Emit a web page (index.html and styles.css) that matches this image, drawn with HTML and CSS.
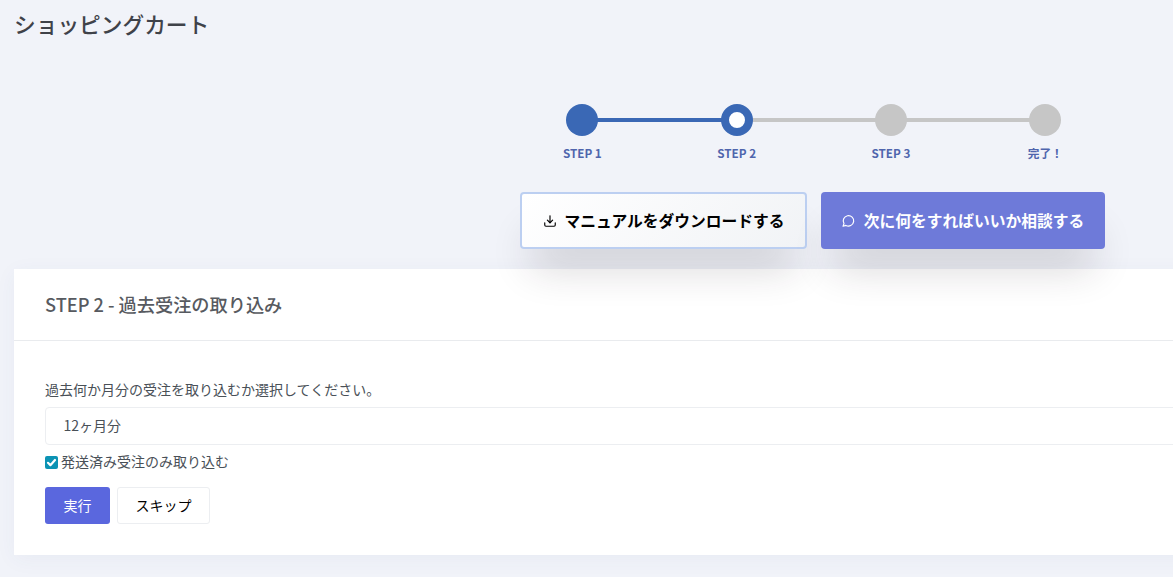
FILE: index.html
```html
<!DOCTYPE html>
<html lang="ja">
<head>
<meta charset="utf-8">
<title>ショッピングカート</title>
<link rel="stylesheet" href="styles.css">
</head>
<body>
<main class="page">
  <h1 class="page-title">ショッピングカート</h1>
  <ol class="stepper">
    <li class="step done"><span class="dot"></span><span class="step-label">STEP 1</span></li>
    <li class="step current"><span class="dot"></span><span class="step-label">STEP 2</span></li>
    <li class="step"><span class="dot"></span><span class="step-label">STEP 3</span></li>
    <li class="step"><span class="dot"></span><span class="step-label">完了！</span></li>
  </ol>
  <div class="actions">
    <a class="action light">
      <svg class="icon icon-download" viewBox="0 0 24 24" fill="none" stroke="currentColor" stroke-width="2" stroke-linecap="round" stroke-linejoin="round"><path d="M12 3v12"/><path d="M7.5 10.5 12 15l4.5-4.5"/><path d="M3 15v4a2 2 0 0 0 2 2h14a2 2 0 0 0 2-2v-4"/></svg>
      マニュアルをダウンロードする
    </a>
    <a class="action primary">
      <svg class="icon icon-chat" viewBox="0 0 24 24" fill="none" stroke="currentColor" stroke-width="2" stroke-linecap="round" stroke-linejoin="round"><path d="M3.5 21l1.6-4.6A9 9 0 1 1 8.4 19.6L3.5 21z"/></svg>
      次に何をすればいいか相談する
    </a>
  </div>
  <section class="card">
    <header class="card-header"><h2 class="card-title">STEP 2 - 過去受注の取り込み</h2></header>
    <div class="card-body">
      <label class="field-label">過去何か月分の受注を取り込むか選択してください。</label>
      <div class="select">12ヶ月分</div>
      <label class="check">
        <span class="checkbox"><svg viewBox="0 0 13 13" fill="none" stroke="#fff" stroke-width="2.2" stroke-linecap="round" stroke-linejoin="round"><path d="M3 6.8 5.4 9.2 10 4"/></svg></span>
        <span class="check-text">発送済み受注のみ取り込む</span>
      </label>
      <div class="buttons">
        <button class="btn btn-run">実行</button>
        <button class="btn btn-skip">スキップ</button>
      </div>
    </div>
  </section>
</main>
</body>
</html>
```

FILE: styles.css
```css
* { box-sizing: border-box; }
html, body { margin: 0; height: 100%; overflow: hidden; }
body {
  background: #f1f3f9;
  font-family: "Noto Sans CJK JP", "Noto Sans", sans-serif;
  color: #495057;
  font-size: 14px;
}
.page { padding: 8px 0 0 14px; width: 1400px; }
.page-title {
  margin: 0;
  font-size: 21.7px;
  line-height: 32px;
  font-weight: 500;
  color: #3f4249;
}
.stepper {
  list-style: none;
  margin: 64px 0 0 491.2px;
  padding: 0;
  display: flex;
  width: 617.2px;
}
.step {
  position: relative;
  width: 154.3px;
  display: flex;
  flex-direction: column;
  align-items: center;
}
.step + .step::before {
  content: "";
  position: absolute;
  top: 14px;
  left: -50%;
  width: 100%;
  height: 4px;
  background: #c6c6c6;
}
.step.done + .step::before { background: #3a68b5; }
.dot {
  position: relative;
  z-index: 1;
  width: 32px;
  height: 32px;
  border-radius: 50%;
  background: #c6c6c6;
}
.done .dot { background: #3a68b5; }
.current .dot { background: #fff; border: 8px solid #3a68b5; }
.step-label {
  margin-top: 8px;
  font-size: 11.7px;
  line-height: 18px;
  font-weight: 700;
  color: #4f65ad;
}
.actions {
  position: relative;
  z-index: 2;
  display: flex;
  gap: 14px;
  margin: 30px 0 0 506px;
}
.action {
  height: 57px;
  display: flex;
  align-items: center;
  justify-content: center;
  gap: 8px;
  font-size: 15.75px;
  font-weight: 700;
  border-radius: 4px;
  box-shadow: 0 30px 40px -12px rgba(40, 30, 40, 0.2);
}
.action.light {
  width: 287px;
  color: #000;
  background: linear-gradient(135deg, #ffffff, #f1f3f6);
  border: 2px solid #bccff1;
}
.action.primary {
  width: 284px;
  color: #fff;
  background: #6e7ad9;
}
.icon { width: 14px; height: 14px; flex: none; }
.icon-download { transform: translateX(1px); }
.icon-chat { transform: translateX(-1px); }
.card {
  margin-top: 20px;
  width: 1300px;
  height: 286px;
  background: #fff;
  box-shadow: 0 4px 20px rgba(60, 70, 130, 0.05);
  position: relative;
}
.card-header {
  height: 72px;
  padding: 0 31px 2px;
  display: flex;
  align-items: center;
  border-bottom: 1px solid #e9ebee;
}
.card-title {
  margin: 0;
  font-size: 18.2px;
  font-weight: 500;
  color: #575a60;
}
.card-body { padding: 38px 31px 0; }
.field-label {
  display: block;
  font-size: 14px;
  line-height: 21px;
}
.select {
  margin-top: 7px;
  height: 38px;
  padding: 0 17.5px 2px;
  display: flex;
  align-items: center;
  border: 1px solid #eceef1;
  border-radius: 4px;
  font-size: 14px;
}
.check {
  margin-top: 7px;
  display: flex;
  align-items: center;
  gap: 3px;
  font-size: 14px;
  line-height: 21px;
}
.check-text { margin-top: -1px; }
.checkbox {
  width: 13px;
  height: 13px;
  border-radius: 2px;
  background: #0c93b4;
  display: block;
}
.checkbox svg { display: block; width: 13px; height: 13px; }
.buttons { display: flex; gap: 7px; margin-top: 15px; }
.btn {
  height: 37px;
  font: inherit;
  font-size: 14px;
  border-radius: 3px;
  padding: 0 0 2px;
}
.btn-run {
  width: 65px;
  color: #fff;
  background: #5a67de;
  border: 0;
}
.btn-skip {
  width: 93px;
  color: #000;
  background: #fff;
  border: 1px solid #eceef1;
}
```
